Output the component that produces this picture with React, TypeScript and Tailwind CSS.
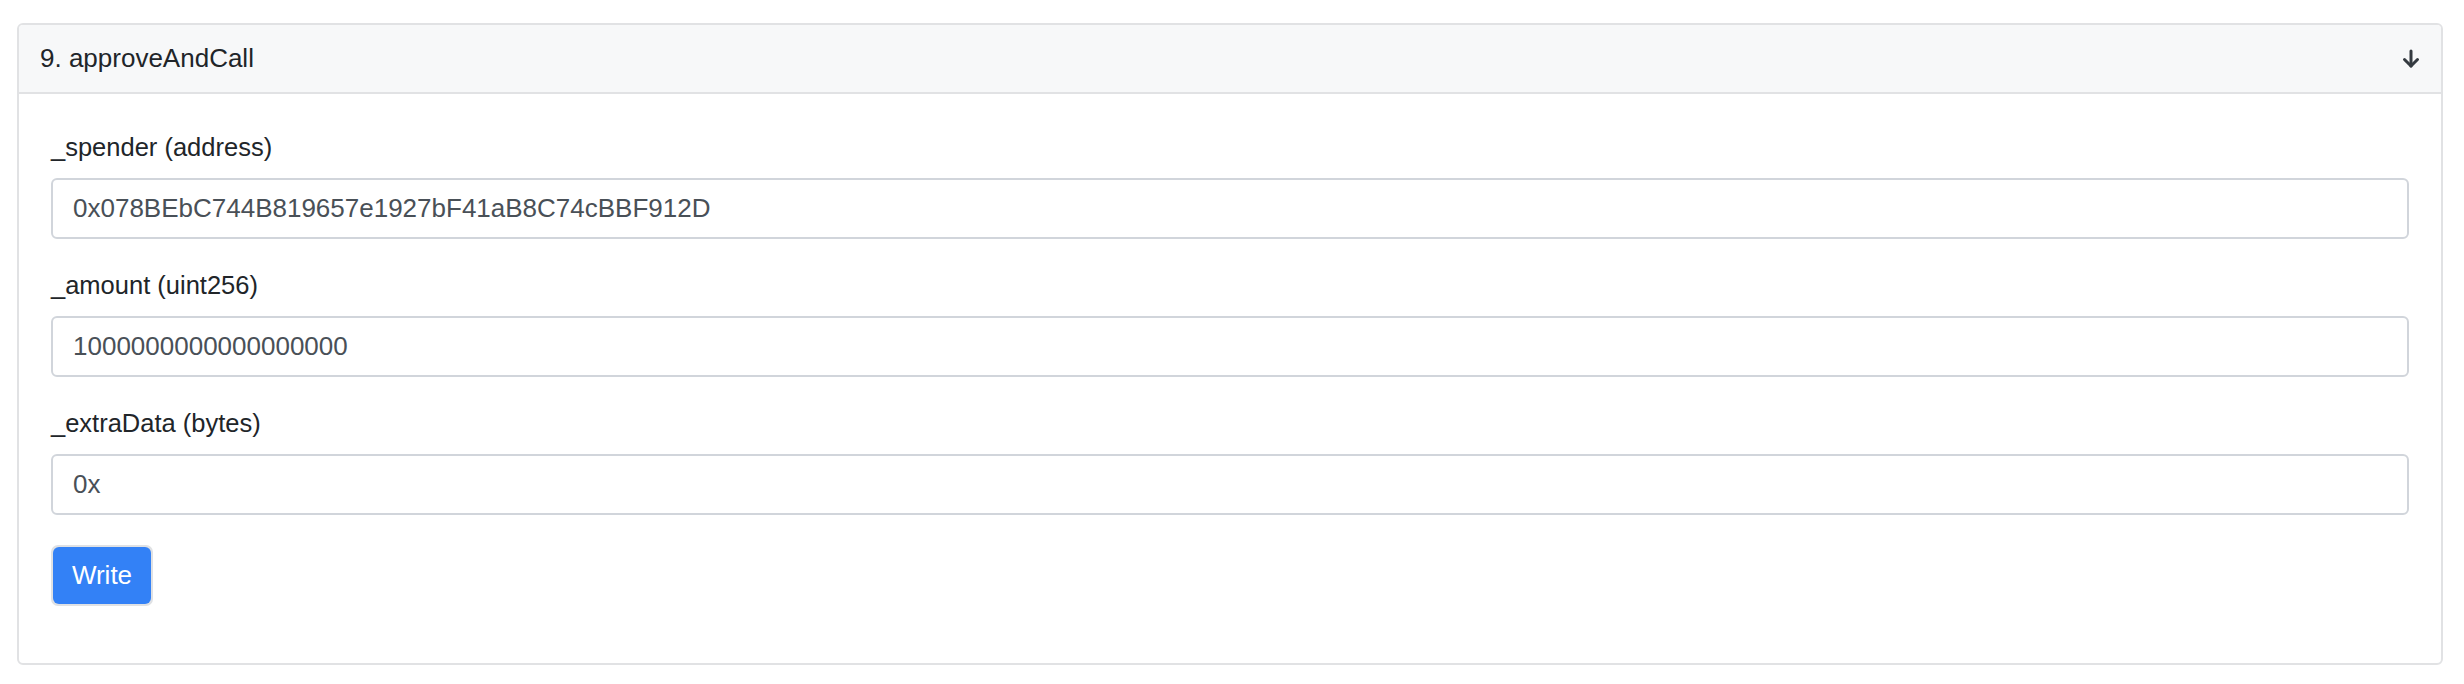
import React from 'react';

const fields = [
    { label: '_spender (address)', value: '0x078BEbC744B819657e1927bF41aB8C74cBBF912D' },
    { label: '_amount (uint256)', value: '1000000000000000000' },
    { label: '_extraData (bytes)', value: '0x' },
];

const ArrowDown = () => (
    <svg width="20" height="20" viewBox="0 0 20 20" fill="none" stroke="#343a40" strokeWidth="3" strokeLinecap="round" strokeLinejoin="round">
        <path d="M10 2v15" />
        <path d="M3.5 10.5L10 17l6.5-6.5" />
    </svg>
);

export default function App() {
    return (
        <div className="min-h-screen bg-white pt-[23px] pl-[17px] pr-[21px]" style={{ fontFamily: '"Liberation Sans", Arial, sans-serif' }}>
            <div className="w-[2426px] h-[642px] rounded-[6px] border-2 border-[#e1e2e4] overflow-hidden">
                {/* Header */}
                <div className="h-[69px] flex items-center justify-between bg-[#f7f8f9] border-b-2 border-[#e1e2e4] pl-[21px] pr-[20px]">
                    <span className="text-[26px] text-[#212529]">9. approveAndCall</span>
                    <ArrowDown />
                </div>

                {/* Body */}
                <div className="pl-[32px] pr-[32px] pt-[34px]">
                    {fields.map((f) => (
                        <div key={f.label} className="mb-[27px]">
                            <div className="text-[25.5px] leading-[38px] text-[#212529] mb-[12px]">{f.label}</div>
                            <div className="h-[61px] rounded-[6px] border-2 border-[#d1d5db] flex items-center pl-[20px] text-[26px] text-[#495057]">
                                {f.value}
                            </div>
                        </div>
                    ))}
                    <div className="mt-[3px] inline-block rounded-[7px] p-[2px] bg-[#dfe1e4]">
                        <button className="h-[57px] w-[98px] rounded-[6px] bg-[#3381f6] text-white text-[26px]">
                            Write
                        </button>
                    </div>
                </div>
            </div>
        </div>
    );
}
